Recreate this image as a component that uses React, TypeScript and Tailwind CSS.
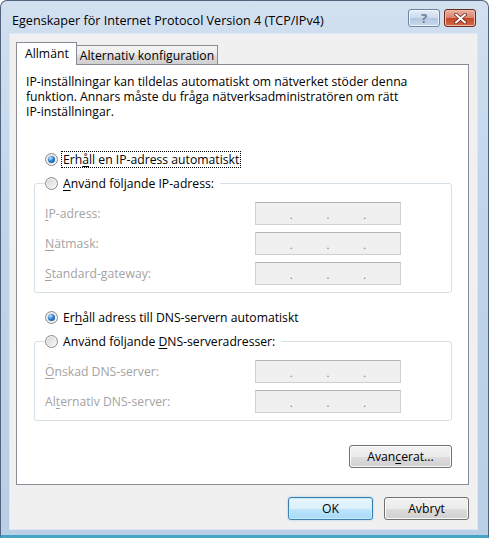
import React from "react"

// Vista-style radio button
function Radio({ checked }: { checked?: boolean }) {
  return (
    <span className="flex h-[13px] w-[13px] shrink-0 items-center justify-center rounded-full border border-[#8b8b8b] bg-[linear-gradient(135deg,#d4d4d4,#fafafa)] shadow-[inset_0_0_0_1px_#f2f2f2]">
      {checked && (
        <span className="h-[7px] w-[7px] rounded-full bg-[radial-gradient(circle_at_35%_30%,#c4e8ff,#2c82d4_45%,#0b3f85)]" />
      )}
    </span>
  )
}

// disabled IP address box with its three dots
function IpBox() {
  return (
    <div className="flex h-[23px] w-[146px] items-center justify-evenly border border-[#d0d0d0] border-t-[#b4b4b4] bg-[#f0f0f0] pt-[3px] text-[11px] leading-none text-[#7a7a7a]">
      <span>.</span>
      <span>.</span>
      <span>.</span>
    </div>
  )
}

function Field({ children }: { children: React.ReactNode }) {
  return (
    <div className="flex h-[22px] items-center">
      <span className="w-[210px] text-[#a3a3a3]">{children}</span>
      <IpBox />
    </div>
  )
}

function Btn({ children, className }: { children: React.ReactNode; className?: string }) {
  return (
    <div
      className={
        "flex h-[23px] items-center justify-center rounded-[3px] border border-[#707070] bg-[linear-gradient(to_bottom,#f2f2f2_0%,#ebebeb_50%,#dddddd_51%,#cfcfcf_100%)] text-black shadow-[inset_0_0_0_1px_#fbfbfb] " +
        (className ?? "")
      }
    >
      {children}
    </div>
  )
}

export default function App() {
  return (
    <div className="flex h-[538px] w-[489px] flex-col overflow-hidden rounded-t-[7px] border border-b-[3px] border-[#51647b] border-b-[#43a4c4] bg-[linear-gradient(to_bottom,#d2e0f0,#c0d5eb_40%,#b9cfe7)] font-['Open_Sans',sans-serif] text-[12.2px] leading-[15px] text-black">
      {/* Title bar */}
      <div className="flex h-[32px] shrink-0 items-start pl-[11px] pr-[12px]">
        <span className="mt-[12px] text-[12.6px] leading-[16px]">
          Egenskaper för Internet Protocol Version 4 (TCP/IPv4)
        </span>
        <div className="ml-auto mt-[8px] flex gap-[4px]">
          <div className="flex h-[18px] w-[32px] items-center justify-center rounded-[3px] border border-[#6f849e] bg-[linear-gradient(to_bottom,#e6eef8,#cbdaec_50%,#b3c8e1_51%,#c6d8ec)] shadow-[inset_0_0_0_1px_#eef4fb]">
            <span className="text-[13px] font-bold leading-none text-[#6e7f95]">?</span>
          </div>
          <div className="flex h-[18px] w-[32px] items-center justify-center rounded-[3px] border border-[#6b2c20] bg-[linear-gradient(to_bottom,#eab3a4,#d9846c_50%,#c4462a_51%,#d66a45)] shadow-[inset_0_0_0_1px_#efb9aa]">
            <svg width="13" height="11" viewBox="0 0 13 11">
              <path d="M2 1.5 L11 9.5 M11 1.5 L2 9.5" stroke="#6b2416" strokeWidth="3.6" strokeLinecap="round" />
              <path d="M2 1.5 L11 9.5 M11 1.5 L2 9.5" stroke="#ffffff" strokeWidth="2" strokeLinecap="round" />
            </svg>
          </div>
        </div>
      </div>

      {/* Client area */}
      <div className="ml-[8px] mr-[10px] flex h-[497px] shrink-0 flex-col border border-[#dce7f3] bg-[#f0f0f0]">
        {/* Tabs */}
        <div className="ml-[6px] mt-[8px] flex h-[22px] items-start">
          <div className="relative z-10 flex h-[23px] w-[61px] items-center border border-b-0 border-[#898c95] bg-white pl-[8px] pb-[2px]">
            Allmänt
          </div>
          <div className="mt-[3px] flex h-[19px] w-[141px] items-center justify-center border border-b-0 border-l-0 border-[#898c95] bg-[linear-gradient(to_bottom,#f3f3f3,#ebebeb_50%,#dddddd_51%,#cfcfcf)]">
            Alternativ konfiguration
          </div>
        </div>

        {/* Tab panel */}
        <div className="ml-[6px] flex h-[421px] w-[453px] flex-col border border-[#898c95] bg-white pl-[9px] pr-[16px] pt-[9px]">
          <p>
            IP-inställningar kan tildelas automatiskt om nätverket stöder denna
            <br />
            funktion. Annars måste du fråga nätverksadministratören om rätt
            <br />
            IP-inställningar.
          </p>

          <div className="mt-[32px] flex h-[16px] items-center gap-[4px] pl-[19px]">
            <Radio checked />
            <span className="px-[1px] outline outline-1 outline-dotted outline-black">
              Erh<span className="underline underline-offset-2">å</span>ll en IP-adress automatiskt
            </span>
          </div>

          <fieldset className="ml-[8px] mt-[8px] rounded-[3px] border border-[#d5dfe5] pb-[8px] pl-[10px] pt-[11px]">
            <legend className="flex h-[16px] items-center gap-[5px] pr-[6px]">
              <Radio />
              <span>
                <span className="underline underline-offset-2">A</span>nvänd följande IP-adress:
              </span>
            </legend>
            <div className="flex flex-col gap-[8px]">
              <Field>
                <span className="underline underline-offset-2">I</span>P-adress:
              </Field>
              <Field>
                <span className="underline underline-offset-2">N</span>ätmask:
              </Field>
              <Field>
                <span className="underline underline-offset-2">S</span>tandard-gateway:
              </Field>
            </div>
          </fieldset>

          <div className="mt-[16px] flex h-[16px] items-center gap-[5px] pl-[19px]">
            <Radio checked />
            <span>
              Er<span className="underline underline-offset-2">h</span>åll adress till DNS-servern automatiskt
            </span>
          </div>

          <fieldset className="ml-[8px] mt-[8px] rounded-[3px] border border-[#d5dfe5] pb-[8px] pl-[10px] pt-[11px]">
            <legend className="flex h-[16px] items-center gap-[5px] pr-[6px]">
              <Radio />
              <span>
                Använd följande <span className="underline underline-offset-2">D</span>NS-serveradresser:
              </span>
            </legend>
            <div className="flex flex-col gap-[8px]">
              <Field>
                <span className="underline underline-offset-2">Ö</span>nskad DNS-server:
              </Field>
              <Field>
                Al<span className="underline underline-offset-2">t</span>ernativ DNS-server:
              </Field>
            </div>
          </fieldset>

          <Btn className="mt-[24px] w-[103px] self-end">
            <span>
              Avan<span className="underline underline-offset-2">c</span>erat...
            </span>
          </Btn>
        </div>

        {/* Dialog buttons */}
        <div className="mt-[12px] flex justify-end gap-[11px] pr-[8px]">
          <div className="flex h-[23px] w-[85px] items-center justify-center rounded-[3px] border border-[#3c7fb1] bg-[linear-gradient(to_bottom,#eaf6fd_0%,#d9f0fc_50%,#bee6fd_51%,#a7d9f5_100%)] shadow-[inset_0_0_0_1px_#c9ecfd,0_0_2px_#7fc6ee]">
            OK
          </div>
          <Btn className="w-[85px]">Avbryt</Btn>
        </div>
      </div>
    </div>
  )
}
